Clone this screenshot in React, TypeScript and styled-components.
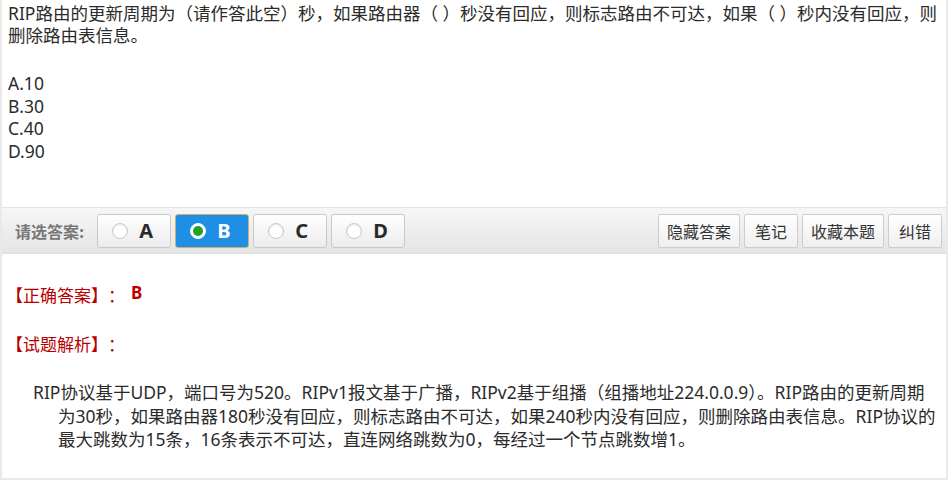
import React from "react";
import styled, { createGlobalStyle } from "styled-components";

const GlobalStyle = createGlobalStyle`
  html, body {
    margin: 0;
    padding: 0;
    background: #ffffff;
  }
  body {
    font-family: "Noto Sans", "Noto Sans CJK SC", sans-serif;
    color: #333;
  }
`;

const Frame = styled.div`
  box-sizing: border-box;
  width: 948px;
  height: 480px;
  border: 2px solid #e9e9e9;
  border-top: none;
  display: flex;
  flex-direction: column;
`;

const QuestionArea = styled.div`
  box-sizing: border-box;
  height: 207px;
  padding: 2px 6px 0 6px;
  font-size: 17.5px;
  color: #2b2b2b;
`;

const Stem = styled.div`
  line-height: 22px;
  white-space: nowrap;
`;

const Options = styled.div`
  margin-top: 26px;
  line-height: 22.5px;
`;

const Toolbar = styled.div`
  box-sizing: border-box;
  height: 47px;
  display: flex;
  align-items: center;
  padding: 0 4px 0 13px;
  background: linear-gradient(#f6f6f6, #e5e5e5);
  border-top: 1px solid #e2e2e2;
  border-bottom: 1px solid #e0e0e0;
`;

const Label = styled.span`
  font-family: "Noto Sans CJK SC", sans-serif;
  font-size: 16px;
  font-weight: bold;
  color: #777;
  margin-right: 13px;
`;

const Choices = styled.div`
  display: flex;
  gap: 4px;
`;

const ChoiceButton = styled.button<{ $active?: boolean }>`
  box-sizing: border-box;
  width: 74px;
  height: 34px;
  display: flex;
  align-items: center;
  padding: 0 0 0 14px;
  gap: 11px;
  border-radius: 3px;
  border: 1px solid ${(p) => (p.$active ? "#cfae72" : "#c9c9c9")};
  background: ${(p) =>
    p.$active ? "#1f8fe6" : "linear-gradient(#ffffff, #ececec)"};
  color: ${(p) => (p.$active ? "#ffffff" : "#2a2a2a")};
  font-family: "Noto Sans", "Open Sans", sans-serif;
  font-weight: bold;
  font-size: 20px;
  cursor: pointer;
`;

const Radio = styled.span<{ $checked?: boolean }>`
  box-sizing: border-box;
  flex: none;
  width: 16px;
  height: 16px;
  border-radius: 50%;
  background: #ffffff;
  border: 1px solid ${(p) => (p.$checked ? "#ffffff" : "#c8c8c8")};
  display: flex;
  align-items: center;
  justify-content: center;
  box-shadow: ${(p) => (p.$checked ? "none" : "inset 0 1px 2px rgba(0,0,0,0.1)")};
  &::after {
    content: "";
    width: 10px;
    height: 10px;
    border-radius: 50%;
    background: #22a127;
    display: ${(p) => (p.$checked ? "block" : "none")};
  }
`;

const Tools = styled.div`
  margin-left: auto;
  display: flex;
  gap: 4px;
`;

const ToolButton = styled.button`
  box-sizing: border-box;
  height: 34px;
  min-width: 54px;
  padding: 0 8px;
  border: 1px solid #cdcdcd;
  border-radius: 2px;
  background: linear-gradient(#ffffff, #efefef);
  font-family: "Noto Sans CJK SC", sans-serif;
  font-size: 16px;
  color: #333;
  cursor: pointer;
`;

const AnswerArea = styled.div`
  padding: 30px 6px 0 4px;
`;

const Heading = styled.div<{ $gap?: number }>`
  font-family: "Noto Sans CJK SC", sans-serif;
  font-size: 17px;
  line-height: 22px;
  color: #b80000;
  margin-top: ${(p) => p.$gap ?? 0}px;
  display: flex;
  align-items: baseline;
  text-spacing-trim: space-all;
`;

const Correct = styled.span`
  font-family: "Noto Sans", sans-serif;
  font-weight: bold;
  font-size: 17px;
  color: #c00000;
  margin-left: 6px;
  position: relative;
  top: -3px;
`;

const Analysis = styled.p`
  margin: 26px 0 0 0;
  padding-left: 52px;
  text-indent: -25px;
  font-size: 17.5px;
  line-height: 23.5px;
  color: #2b2b2b;
  white-space: nowrap;
`;

export default function App() {
  return (
    <>
      <GlobalStyle />
      <Frame>
        <QuestionArea>
          <Stem>
            RIP路由的更新周期为（请作答此空）秒，如果路由器（ ）秒没有回应，则标志路由不可达，如果（ ）秒内没有回应，则
            <br />
            删除路由表信息。
          </Stem>
          <Options>
            <div>A.10</div>
            <div>B.30</div>
            <div>C.40</div>
            <div>D.90</div>
          </Options>
        </QuestionArea>
        <Toolbar>
          <Label>请选答案:</Label>
          <Choices>
            {["A", "B", "C", "D"].map((l) => (
              <ChoiceButton key={l} $active={l === "B"}>
                <Radio $checked={l === "B"} />
                {l}
              </ChoiceButton>
            ))}
          </Choices>
          <Tools>
            <ToolButton>隐藏答案</ToolButton>
            <ToolButton>笔记</ToolButton>
            <ToolButton>收藏本题</ToolButton>
            <ToolButton>纠错</ToolButton>
          </Tools>
        </Toolbar>
        <AnswerArea>
          <Heading>
            【正确答案】：<Correct>B</Correct>
          </Heading>
          <Heading $gap={26}>【试题解析】：</Heading>
          <Analysis>
            RIP协议基于UDP，端口号为520。RIPv1报文基于广播，RIPv2基于组播（组播地址224.0.0.9）。RIP路由的更新周期
            <br />
            为30秒，如果路由器180秒没有回应，则标志路由不可达，如果240秒内没有回应，则删除路由表信息。RIP协议的
            <br />
            最大跳数为15条，16条表示不可达，直连网络跳数为0，每经过一个节点跳数增1。
          </Analysis>
        </AnswerArea>
      </Frame>
    </>
  );
}
